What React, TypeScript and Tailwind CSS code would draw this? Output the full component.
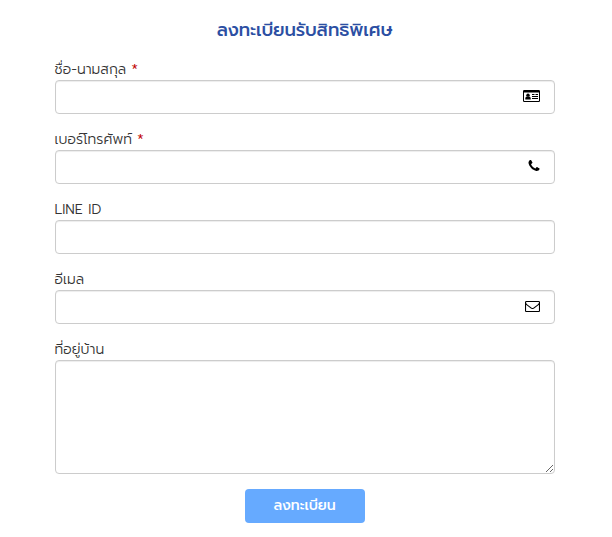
import React from 'react';

const inputClass =
  'block w-full rounded border border-[#ccc] bg-white px-3 text-sm text-[#555] shadow-[inset_0_1px_1px_rgba(0,0,0,0.075)] outline-none focus:border-[#66afe9]';

const IdCardIcon: React.FC = () => (
  <svg className="h-3 w-[17px]" viewBox="0 0 17 12" fill="#000">
    <path fillRule="evenodd" d="M1.2 0h14.6Q17 0 17 1.2v9.6q0 1.2-1.2 1.2H1.2Q0 12 0 10.8V1.2Q0 0 1.2 0zM1 2.5v8.1q0 .4.4.4h14.2q.4 0 .4-.4V2.5z" />
    <circle cx="5" cy="5.3" r="1.7" />
    <path d="M2.3 9.5V8.3q0-1.4 1.3-1.8.6.6 1.4.6t1.4-.6q1.3.4 1.3 1.8v1.2z" />
    <path d="M9 4h2.5v1H9zM12.5 4H15v1h-2.5zM9 6h6v1H9zM9 8h6v1H9z" />
  </svg>
);

const PhoneIcon: React.FC = () => (
  <svg className="-mr-px h-[14px] w-[14px]" viewBox="0 0 1792 1792" fill="#000">
    <path d="M1600 1240q0 27-10 70.5t-21 68.5q-21 50-122 106-94 51-186 51-27 0-53-3.5t-57.5-12.5-47-14.5-55.5-20.5-49-18q-98-35-175-83-127-79-264-216t-216-264q-48-77-83-175-3-9-18-49t-20.5-55.5-14.5-47-12.5-57.5-3.5-53q0-92 51-186 56-101 106-122 25-11 68.5-21t70.5-10q14 0 21 3 18 6 53 76 11 19 30 54t35 63.5 31 53.5q3 4 17.5 25t21.5 35.5 7 28.5q0 20-28.5 50t-62 55-62 53-28.5 46q0 9 5 22.5t8.5 20.5 14 24 11.5 19q76 137 174 235t235 174q2 1 19 11.5t24 14 20.5 8.5 22.5 5q18 0 46-28.5t53-62 55-62 50-28.5q14 0 28.5 7t35.5 21.5 25 17.5q25 15 53.5 31t63.5 35 54 30q70 35 76 53 3 7 3 21z" />
  </svg>
);

const MailIcon: React.FC = () => (
  <svg className="h-[14px] w-[15px]" viewBox="0 0 1792 1792" preserveAspectRatio="none" fill="#000">
    <path d="M1664 1504v-768q-32 36-69 66-268 206-426 338-51 43-83 67t-86.5 48.5-102.5 24.5h-2q-48 0-102.5-24.5t-86.5-48.5-83-67q-158-132-426-338-37-30-69-66v768q0 13 9.5 22.5t22.5 9.5h1472q13 0 22.5-9.5t9.5-22.5zm0-1051v-24.5l-.5-13-3-12.5-5.5-9-9-7.5-14-2.5h-1472q-13 0-22.5 9.5t-9.5 22.5q0 168 147 284 193 152 401 317 6 5 35 29.5t46 37.5 44.5 31.5 50.5 27.5 43 9h2q20 0 43-9t50.5-27.5 44.5-31.5 46-37.5 35-29.5q208-165 401-317 54-43 100.5-115.5t46.5-131.5zm128-37v1088q0 66-47 113t-113 47h-1472q-66 0-113-47t-47-113v-1088q0-66 47-113t113-47h1472q66 0 113 47t47 113z" />
  </svg>
);

const labelClass =
  '-ml-[0.5px] flex h-5 items-center gap-1.5 whitespace-nowrap text-sm leading-5 font-light tracking-[0.05px]';

interface FieldProps {
  id: string;
  label: string;
  type?: string;
  required?: boolean;
  icon?: React.ReactNode;
}

const Field: React.FC<FieldProps> = ({ id, label, type = 'text', required, icon }) => (
  <div className="mb-4">
    <label htmlFor={id} className={labelClass}>
      <span>{label}</span>
      {required && <span className="-ml-px text-base text-[#c00000]">*</span>}
    </label>
    <div className="relative">
      <input id={id} name={id} type={type} required={required} className={`${inputClass} h-[34px]`} />
      {icon && <span className="pointer-events-none absolute top-0 right-[15px] bottom-0.5 flex items-center">{icon}</span>}
    </div>
  </div>
);

const App: React.FC = () => (
  <main className="h-[537px] bg-white px-[55px] pt-4 font-['Prompt','Kanit','Noto_Sans_Thai','Noto_Sans',sans-serif] text-[#333]">
    <form className="w-[500px]" onSubmit={(e) => e.preventDefault()}>
      <h1 className="mb-4 flex h-7 items-center justify-center whitespace-nowrap pr-px text-lg font-medium tracking-[-0.15px] text-[#2c4fa3]">
        <span>ลงทะเบียนรับสิทธิพิเศษ</span>
      </h1>

      <Field id="name" label="ชื่อ-นามสกุล" required icon={<IdCardIcon />} />
      <Field id="phone" label="เบอร์โทรศัพท์" type="tel" required icon={<PhoneIcon />} />
      <Field id="line" label="LINE ID" />
      <Field id="email" label="อีเมล" type="email" icon={<MailIcon />} />

      <label htmlFor="address" className={labelClass}>
        <span>ที่อยู่บ้าน</span>
      </label>
      <textarea id="address" name="address" className={`${inputClass} h-[114px] resize py-1.5`} />

      <button
        type="submit"
        className="mx-auto mt-[15px] flex h-[34px] w-[120px] items-center justify-center whitespace-nowrap rounded bg-[#66aaff] pr-px text-sm font-medium tracking-[-0.05px] text-white"
      >
        <span>ลงทะเบียน</span>
      </button>
    </form>
  </main>
);

export default App;
